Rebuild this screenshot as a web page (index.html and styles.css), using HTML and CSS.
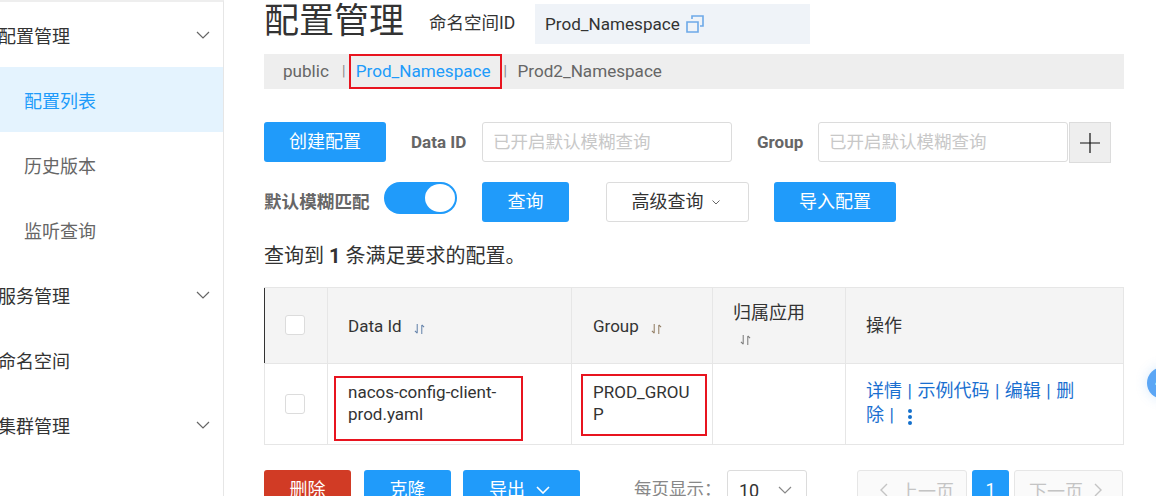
FILE: index.html
```html
<!DOCTYPE html>
<html lang="zh-CN">
<head>
    <meta charset="UTF-8">
    <title>配置管理</title>
    <link rel="stylesheet" href="styles.css">
</head>
<body>
    <aside class="sidebar">
        <div class="nav-item">配置管理<svg class="nav-arrow" viewBox="0 0 14 8"><path d="M1 1l6 6 6-6"/></svg></div>
        <div class="nav-sub active">配置列表</div>
        <div class="nav-sub">历史版本</div>
        <div class="nav-sub">监听查询</div>
        <div class="nav-item">服务管理<svg class="nav-arrow" viewBox="0 0 14 8"><path d="M1 1l6 6 6-6"/></svg></div>
        <div class="nav-item">命名空间</div>
        <div class="nav-item">集群管理<svg class="nav-arrow" viewBox="0 0 14 8"><path d="M1 1l6 6 6-6"/></svg></div>
    </aside>

    <main class="content">
        <header class="page-head">
            <h1>配置管理</h1>
            <span class="ns-label">命名空间ID</span>
            <div class="ns-box">Prod_Namespace
                <svg class="copy-icon" viewBox="0 0 18 18"><path d="M1 7h11v10H1z"/><path d="M6 4V1h11v10h-3"/></svg>
            </div>
        </header>

        <nav class="ns-tabs">
            <span class="ns-tab">public</span>
            <span class="ns-sep">|</span>
            <span class="ns-tab ns-current">Prod_Namespace<i class="mark mark-tab"></i></span>
            <span class="ns-sep">|</span>
            <span class="ns-tab">Prod2_Namespace</span>
        </nav>

        <div class="filter-row first">
            <button class="btn btn-primary btn-create">创建配置</button>
            <label class="field-label label-data">Data ID</label>
            <div class="input">已开启默认模糊查询</div>
            <label class="field-label label-group">Group</label>
            <div class="input">已开启默认模糊查询</div>
            <div class="plus-box"><svg viewBox="0 0 20 20"><path d="M0 10h20M10 0v20"/></svg></div>
        </div>

        <div class="filter-row second">
            <label class="field-label label-fuzzy">默认模糊匹配</label>
            <div class="switch"><span class="knob"></span></div>
            <button class="btn btn-primary btn-query">查询</button>
            <button class="btn btn-plain">高级查询<svg class="mini-arrow" viewBox="0 0 8 5"><path d="M.5.5L4 4 7.5.5"/></svg></button>
            <button class="btn btn-primary btn-import">导入配置</button>
        </div>

        <p class="result-note">查询到 <b>1</b> 条满足要求的配置。</p>

        <table class="config-table">
            <colgroup>
                <col class="c-check"><col class="c-id"><col class="c-group"><col class="c-app"><col class="c-op">
            </colgroup>
            <thead>
                <tr>
                    <th class="cell-check head-first"><span class="checkbox"></span></th>
                    <th>Data Id <svg class="sort" viewBox="0 0 12 13"><path d="M3.500 1v10M1 8.500L3.500 11M8.500 12V2M8.500 2L11 4.500"/></svg></th>
                    <th class="cell-group">Group <svg class="sort sort-warm" viewBox="0 0 12 13"><path d="M3.500 1v10M1 8.500L3.500 11M8.500 12V2M8.500 2L11 4.500"/></svg></th>
                    <th class="head-cjk head-app">归属应用<br><svg class="sort sort-under" viewBox="0 0 12 13"><path d="M3.500 1v10M1 8.500L3.500 11M8.500 12V2M8.500 2L11 4.500"/></svg></th>
                    <th class="head-cjk">操作</th>
                </tr>
            </thead>
            <tbody>
                <tr>
                    <td class="cell-check"><span class="checkbox"></span></td>
                    <td class="cell-mark">nacos-config-client-prod.yaml<i class="mark mark-id"></i></td>
                    <td class="cell-mark cell-group cell-break">PROD_GROUP<i class="mark mark-group"></i></td>
                    <td></td>
                    <td class="cell-ops"><a>详情</a><span class="op-sep">|</span><a>示例代码</a><span class="op-sep">|</span><a>编辑</a><span class="op-sep">|</span><a>删除</a><span class="op-sep">|</span><span class="more"><b></b><b></b><b></b></span></td>
                </tr>
            </tbody>
        </table>

        <div class="table-foot">
            <button class="btn btn-danger">删除</button>
            <button class="btn btn-primary btn-clone">克隆</button>
            <button class="btn btn-primary btn-export">导出<svg class="export-arrow" viewBox="0 0 14 8"><path d="M1 1l6 6 6-6"/></svg></button>
            <span class="page-size">每页显示：</span>
            <div class="select">10<svg class="select-arrow" viewBox="0 0 14 8"><path d="M1 1l6 6 6-6"/></svg></div>
            <div class="pager">
                <span class="page-btn page-prev"><svg viewBox="0 0 8 14"><path d="M7 1L1 7l6 6"/></svg>上一页</span>
                <span class="page-num">1</span>
                <span class="page-btn page-next">下一页<svg viewBox="0 0 8 14"><path d="M1 1l6 6-6 6"/></svg></span>
            </div>
        </div>
    </main>

    <div class="float-ball">4</div>
</body>
</html>
```

FILE: styles.css
```css
* {
    box-sizing: border-box;
}

html, body {
    height: 496px;
    overflow: hidden;
}

body {
    margin: 0;
    display: flex;
    width: 1156px;
    font-family: Roboto, "Noto Sans CJK SC", sans-serif;
    font-size: 16px;
    color: #333;
    background: #fff;
}

/* sidebar */
.sidebar {
    flex: 0 0 224px;
    height: 496px;
    border-right: 1px solid #e6e6e6;
    border-top: 2px solid #eeeeee;
}

.nav-item, .nav-sub {
    height: 65px;
    display: flex;
    align-items: center;
    font-size: 18px;
    white-space: nowrap;
}

.nav-item {
    padding-left: 0;
    margin-left: -2px;
    color: #333;
    justify-content: space-between;
    padding-right: 13px;
}

.nav-sub {
    padding-left: 24px;
    color: #666;
}

.nav-sub.active {
    background: #e4f3fe;
    color: #209bfa;
}

.nav-arrow {
    width: 14px;
    height: 8px;
    fill: none;
    stroke: #666;
    stroke-width: 1.2;
}

/* main column */
.content {
    flex: 0 0 859px;
    margin-left: 40px;
}

.page-head {
    height: 54px;
    padding-top: 4px;
    display: flex;
    align-items: flex-start;
}

.page-head h1 {
    width: 165px;
    margin: 0;
    height: 40px;
    font-size: 35px;
    font-weight: 400;
    line-height: 35px;
    color: #333;
}

.ns-label {
    width: 106px;
    font-size: 17.500px;
    line-height: 38px;
    white-space: nowrap;
}

.ns-box {
    width: 275px;
    height: 40px;
    padding-left: 10px;
    line-height: 40px;
    font-size: 17.1px;
    background: #eff3f8;
    display: flex;
    align-items: center;
    gap: 6px;
}

.copy-icon {
    width: 18px;
    height: 18px;
    fill: none;
    stroke: #6da9e8;
    stroke-width: 1.6;
}

.ns-tabs {
    height: 35px;
    padding: 0 0 2px 19px;
    background: #eeeeee;
    display: flex;
    align-items: center;
    font-size: 17.1px;
    color: #666;
}

.ns-tab {
    position: relative;
}

.ns-sep {
    margin: 0 10.500px 0 13px;
    font-size: 14px;
    color: #888;
}

.ns-current {
    color: #209bfa;
}

/* hand drawn red marks, they lie over the content */
.mark {
    position: absolute;
    border: 2px solid #e8141f;
    pointer-events: none;
}

.mark-tab {
    left: -7px;
    right: -11px;
    top: -7px;
    height: 35px;
}

.mark-id {
    left: 6px;
    top: 12px;
    width: 189px;
    height: 65px;
}

.mark-group {
    left: 9px;
    top: 10px;
    width: 126px;
    height: 62px;
}

/* filters */
.filter-row {
    display: flex;
    align-items: flex-start;
}

.filter-row.first {
    margin-top: 33px;
    height: 60px;
}

.filter-row.second {
    height: 56px;
}

.btn {
    height: 40px;
    border: 0;
    border-radius: 3px;
    font-family: inherit;
    font-size: 18px;
    line-height: 24px;
    color: #fff;
    padding: 0 0 1px;
}

.btn-primary {
    background: #209bfa;
}

.btn-create {
    width: 122px;
    margin-right: 25px;
}

.field-label {
    font-weight: 700;
    font-size: 17px;
    color: #666;
    line-height: 40px;
    white-space: nowrap;
}

.label-data {
    width: 71px;
}

.label-group {
    width: 61px;
    margin-left: 25px;
}

.label-fuzzy {
    width: 105px;
    font-size: 17.600px;
}

.input {
    width: 250px;
    height: 40px;
    padding-left: 10px;
    border: 1px solid #dcdcdc;
    border-radius: 3px;
    font-size: 17.500px;
    line-height: 38px;
    color: #c8c8c8;
    white-space: nowrap;
}

.plus-box {
    width: 42px;
    height: 41px;
    margin-left: 1px;
    background: #eeeeee;
    border: 1px solid #dcdcdc;
    display: flex;
    align-items: center;
    justify-content: center;
}

.plus-box svg {
    width: 20px;
    height: 20px;
    stroke: #111;
    stroke-width: 1.2;
}

.switch {
    width: 73px;
    height: 32px;
    margin-left: 15px;
    border-radius: 16px;
    background: #209bfa;
    padding: 2px 2px 2px 41px;
}

.knob {
    display: block;
    width: 30px;
    height: 28px;
    border-radius: 50%;
    background: #fff;
}

.btn-query {
    width: 87px;
    margin-left: 25px;
}

.btn-plain {
    width: 143px;
    margin-left: 37px;
    padding-right: 4px;
    border: 1px solid #dcdcdc;
    background: #fff;
    color: #333;
}

.mini-arrow {
    width: 8px;
    height: 5px;
    margin-left: 8px;
    vertical-align: 3px;
    fill: none;
    stroke: #666;
}

.btn-import {
    width: 122px;
    margin-left: 25px;
}

.result-note {
    margin: 0;
    height: 49px;
    font-size: 20px;
    line-height: 36px;
    white-space: nowrap;
}

/* table */
.config-table {
    width: 859px;
    table-layout: fixed;
    border-collapse: collapse;
    font-size: 17px;
}

.c-check { width: 63px; }
.c-id { width: 244px; }
.c-group { width: 141px; }
.c-app { width: 133px; }
.c-op { width: 278px; }

.config-table th, .config-table td {
    border: 1px solid #e6e6e6;
    padding: 0 20px;
    text-align: left;
    vertical-align: middle;
    position: relative;
    line-height: 22px;
}

.config-table th {
    height: 76px;
    font-weight: 400;
    background: #f4f4f4;
}

.config-table td {
    height: 81px;
}

.config-table .cell-check {
    padding: 0 0 0 20px;
}

.config-table .head-first {
    border-left: 1px solid #333;
}

.config-table .head-cjk {
    font-size: 18px;
}

.config-table .head-app {
    line-height: 24px;
    padding-bottom: 2px;
}

.config-table .cell-group {
    padding-left: 21px;
}

.config-table .cell-mark {
    padding-bottom: 2px;
}

.cell-break {
    word-break: break-all;
}

.checkbox {
    display: block;
    width: 20px;
    height: 20px;
    border: 1px solid #dcdcdc;
    border-radius: 3px;
    background: #fff;
}

th .checkbox {
    margin-bottom: 2px;
}

.sort {
    width: 11px;
    height: 12px;
    margin-left: 8px;
    fill: none;
    stroke: #5f7fa8;
    stroke-width: 1.1;
    vertical-align: -3px;
}

.sort-warm {
    stroke: #8f7a5f;
}

.sort-under {
    margin: 6px 0 0 7px;
    stroke: #777;
}

.config-table .cell-ops {
    padding: 0 38px 3px 20px;
    font-size: 18px;
    line-height: 24px;
    color: #1a6fd0;
}

.op-sep {
    margin: 0 5.500px;
}

.more {
    display: inline-flex;
    flex-direction: column;
    gap: 2px;
    margin: -10px 0 -10px 9px;
    vertical-align: 8px;
}

.more b {
    width: 4px;
    height: 4px;
    border-radius: 50%;
    background: #1470cc;
}

/* bottom bar */
.table-foot {
    margin-top: 25px;
    display: flex;
    align-items: flex-start;
    height: 40px;
}

.btn-danger {
    width: 87px;
    background: #d13b25;
}

.btn-clone {
    width: 87px;
    margin-left: 13px;
}

.btn-export {
    width: 117px;
    margin-left: 12px;
    padding-right: 4px;
}

.export-arrow {
    width: 14px;
    height: 8px;
    margin-left: 11px;
    vertical-align: 2px;
    fill: none;
    stroke: #fff;
    stroke-width: 1.6;
}

.page-size {
    margin-left: 54px;
    width: 93px;
    font-size: 17.500px;
    line-height: 38px;
    color: #888;
    white-space: nowrap;
}

.select {
    width: 80px;
    height: 40px;
    padding: 0 14px 0 11px;
    border: 1px solid #dcdcdc;
    border-radius: 3px;
    display: flex;
    align-items: center;
    justify-content: space-between;
    font-size: 18px;
}

.select-arrow {
    width: 14px;
    height: 8px;
    fill: none;
    stroke: #888;
    stroke-width: 1.2;
}

.pager {
    margin-left: 50px;
    display: flex;
    gap: 5px;
}

.page-btn {
    height: 40px;
    width: 110px;
    padding: 0 0 1px 22px;
    border: 1px solid #e6e6e6;
    border-radius: 3px;
    background: #fafafa;
    color: #c4c4c4;
    display: flex;
    align-items: center;
    gap: 12px;
    font-size: 18px;
}

.page-next {
    width: 109px;
    padding-left: 14px;
    gap: 11px;
}

.page-btn svg {
    width: 8px;
    height: 14px;
    fill: none;
    stroke: #c4c4c4;
    stroke-width: 1.4;
}

.page-num {
    width: 37px;
    height: 40px;
    border-radius: 3px;
    background: #209bfa;
    color: #fff;
    text-align: center;
    line-height: 40px;
    font-size: 18px;
}

.float-ball {
    position: absolute;
    left: 1147px;
    top: 367px;
    width: 32px;
    height: 32px;
    border-radius: 50%;
    background: #5ba6f5;
    color: #fff;
    padding-left: 8px;
    line-height: 32px;
    font-weight: 700;
    box-shadow: 0 0 12px rgba(91, 166, 245, 0.25);
}
```
